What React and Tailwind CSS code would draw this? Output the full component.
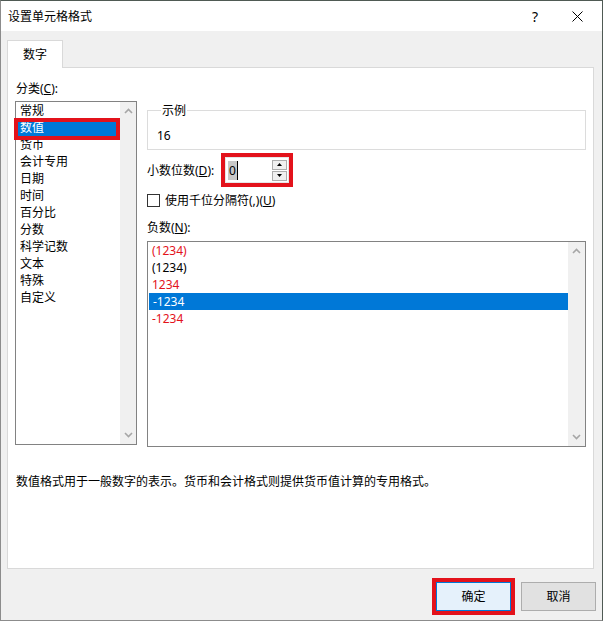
import React from 'react';

const categories = ['常规', '数值', '货币', '会计专用', '日期', '时间', '百分比', '分数', '科学记数', '文本', '特殊', '自定义'];

const negatives = [
    { text: '(1234)', red: true },
    { text: '(1234)', red: false },
    { text: '1234', red: true },
    { text: '-1234', red: false, selected: true },
    { text: '-1234', red: true },
];

function Chevron({ up }) {
    return (
        <svg width="9" height="6" viewBox="0 0 9 6" className="block">
            <path
                d={up ? 'M1 5 L4.5 1.5 L8 5' : 'M1 1 L4.5 4.5 L8 1'}
                fill="none"
                stroke="#a6a6a6"
                strokeWidth="1.6"
            />
        </svg>
    );
}

function ScrollBar({ width }) {
    return (
        <div className={`${width} bg-[#f0f0f0] flex flex-col items-center justify-between py-[6px] shrink-0`}>
            <Chevron up />
            <Chevron />
        </div>
    );
}

export default function App() {
    return (
        <div
            className="w-[603px] h-[621px] flex flex-col bg-[#f0f0f0] border border-[#8c8c8c] border-t-[#4f5a54] border-r-[#4f5a54] text-[12px] leading-[17px] text-black"
            style={{ fontFamily: '"Noto Sans", "Noto Sans CJK SC", sans-serif' }}
        >
            {/* Title bar */}
            <div className="h-[30px] bg-white flex items-center pl-[7px] shrink-0">
                <span className="flex-1">设置单元格格式</span>
                <span className="w-[20px] text-center text-[14px] mr-[27px]">?</span>
                <svg width="11" height="11" viewBox="0 0 11 11" className="mr-[19px]">
                    <path d="M0.5 0.5 L10.5 10.5 M10.5 0.5 L0.5 10.5" stroke="#000" strokeWidth="1" />
                </svg>
            </div>

            <div className="flex-1 flex flex-col pl-[6px] pr-[6px]">
                {/* Tab strip */}
                <div className="pt-[9px] flex">
                    <div className="relative z-10 -mb-px w-[56px] h-[28px] bg-white border border-b-0 border-[#d9d9d9] flex items-center justify-center">
                        数字
                    </div>
                </div>

                {/* Tab panel */}
                <div className="w-[587px] h-[502px] bg-white border border-[#d9d9d9] flex flex-col">
                    <div className="flex pl-[7px]">
                        {/* Category column */}
                        <div className="w-[122px] pt-[12px] flex flex-col">
                            <div className="pl-[1px]">
                                分类(<span className="underline">C</span>):
                            </div>
                            <div className="mt-[4px] h-[344px] border border-[#828282] flex">
                                <ul className="flex-1 pt-0">
                                    {categories.map((c) => (
                                        <li
                                            key={c}
                                            className={
                                                c === '数值'
                                                    ? 'relative h-[17px] pl-[3px] ml-[1px] bg-[#0078d7] text-white'
                                                    : 'h-[17px] pl-[4px]'
                                            }
                                        >
                                            {c}
                                            {c === '数值' && (
                                                <span className="absolute -left-[3px] -top-px w-[106px] h-[22px] border-[4px] border-[#e3121b]" />
                                            )}
                                        </li>
                                    ))}
                                </ul>
                                <ScrollBar width="w-[16px]" />
                            </div>
                        </div>

                        {/* Options column */}
                        <div className="w-[439px] ml-[10px] pt-[34px] flex flex-col">
                            <fieldset className="border border-[#dcdcdc] pl-[9px] pb-[6px] h-[48px]">
                                <legend className="ml-[4px] px-[1px]">示例</legend>
                                <div className="mt-[8px]">16</div>
                            </fieldset>

                            <div className="mt-[3px] h-[34px] flex items-center">
                                <span className="w-[78px]">
                                    小数位数(<span className="underline">D</span>):
                                </span>
                                <div className="relative w-[64px] h-[26px] bg-white border border-[#e6e6e6] flex items-center pl-[2px]">
                                    <span className="bg-[#c8c8c8] leading-[19px] px-px border-r border-black">0</span>
                                    <div className="ml-auto mr-[1px] flex flex-col gap-px">
                                        <div className="w-[15px] h-[10px] bg-[#f0f0f0] border border-[#adadad] flex items-center justify-center">
                                            <svg width="5" height="3" viewBox="0 0 5 3"><path d="M0 3 L2.5 0 L5 3Z" fill="#000" /></svg>
                                        </div>
                                        <div className="w-[15px] h-[10px] bg-[#f0f0f0] border border-[#adadad] flex items-center justify-center">
                                            <svg width="5" height="3" viewBox="0 0 5 3"><path d="M0 0 L2.5 3 L5 0Z" fill="#000" /></svg>
                                        </div>
                                    </div>
                                    <span className="absolute -left-[5px] -top-[5px] -right-[5px] -bottom-[5px] border-[4px] border-[#e3121b]" />
                                </div>
                            </div>

                            <label className="mt-[5px] h-[16px] flex items-center">
                                <span className="w-[13px] h-[13px] border border-[#333] bg-white mr-[5px]" />
                                使用千位分隔符(,)(<span className="underline">U</span>)
                            </label>

                            <div className="mt-[11px]">
                                负数(<span className="underline">N</span>):
                            </div>

                            <div className="mt-[5px] h-[206px] border border-[#828282] flex">
                                <ul className="flex-1">
                                    {negatives.map((n, i) => (
                                        <li
                                            key={i}
                                            className={
                                                n.selected
                                                    ? 'h-[17px] pl-[4px] ml-px bg-[#0078d7] text-white'
                                                    : n.red
                                                      ? 'h-[17px] pl-[4px] text-[#e3121b]'
                                                      : 'h-[17px] pl-[4px]'
                                            }
                                        >
                                            {n.text}
                                        </li>
                                    ))}
                                </ul>
                                <ScrollBar width="w-[17px]" />
                            </div>
                        </div>
                    </div>

                    <p className="mt-[26px] pl-[8px]">
                        数值格式用于一般数字的表示。货币和会计格式则提供货币值计算的专用格式。
                    </p>
                </div>

                {/* Dialog buttons */}
                <div className="mt-[13px] flex justify-end gap-[10px]">
                    <button className="relative w-[75px] h-[29px] bg-[#e5f1fb] border border-[#0078d7]">
                        确定
                        <span className="absolute -left-[5px] -top-[5px] -right-[5px] -bottom-[5px] border-[4px] border-[#e3121b]" />
                    </button>
                    <button className="w-[75px] h-[29px] bg-[#e1e1e1] border border-[#adadad]">取消</button>
                </div>
            </div>
        </div>
    );
}
